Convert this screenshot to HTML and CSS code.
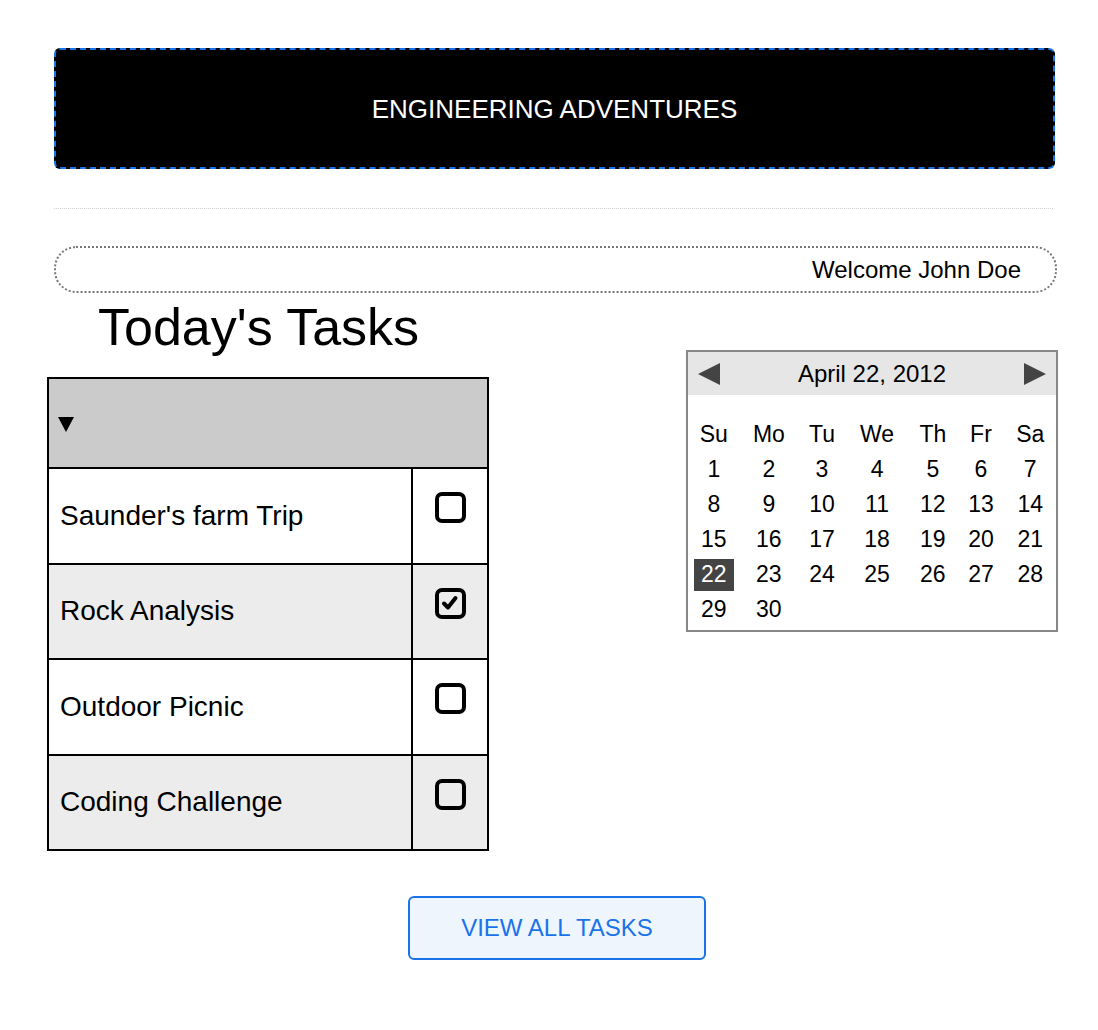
FILE: index.html
```html
<!DOCTYPE html>
<html lang="en">
<head>
<meta charset="utf-8">
<title>Engineering Adventures</title>
<link rel="stylesheet" href="styles.css">
</head>
<body>
<div class="page">
  <header class="banner">ENGINEERING ADVENTURES</header>
  <div class="divider"></div>
  <div class="welcome">Welcome John Doe</div>

  <div class="main">
    <section class="tasks">
      <h1 class="tasks-title">Today's Tasks</h1>
      <div class="task-table">
        <div class="task-head">
          <svg class="sort-tri" width="16" height="15" viewBox="0 0 16 15"><polygon points="0,0 16,0 8,15" fill="#000"/></svg>
        </div>
        <div class="task-row">
          <div class="task-name">Saunder's farm Trip</div>
          <div class="task-check"><span class="box"></span></div>
        </div>
        <div class="task-row alt">
          <div class="task-name">Rock Analysis</div>
          <div class="task-check"><span class="box"><svg width="22" height="22" viewBox="0 0 22 22"><polyline points="5,11.5 9,15.5 16.5,6" fill="none" stroke="#000" stroke-width="4" stroke-linecap="round" stroke-linejoin="round"/></svg></span></div>
        </div>
        <div class="task-row">
          <div class="task-name">Outdoor Picnic</div>
          <div class="task-check"><span class="box"></span></div>
        </div>
        <div class="task-row alt">
          <div class="task-name">Coding Challenge</div>
          <div class="task-check"><span class="box"></span></div>
        </div>
      </div>
    </section>

    <aside class="calendar">
      <div class="cal-head">
        <svg width="22" height="22" viewBox="0 0 22 22"><polygon points="22,0 22,22 0,11" fill="#444"/></svg>
        <span class="cal-title">April 22, 2012</span>
        <svg width="22" height="22" viewBox="0 0 22 22"><polygon points="0,0 0,22 22,11" fill="#444"/></svg>
      </div>
      <table class="cal-grid">
        <tr><th>Su</th><th>Mo</th><th>Tu</th><th>We</th><th>Th</th><th>Fr</th><th>Sa</th></tr>
        <tr><td>1</td><td>2</td><td>3</td><td>4</td><td>5</td><td>6</td><td>7</td></tr>
        <tr><td>8</td><td>9</td><td>10</td><td>11</td><td>12</td><td>13</td><td>14</td></tr>
        <tr><td>15</td><td>16</td><td>17</td><td>18</td><td>19</td><td>20</td><td>21</td></tr>
        <tr><td><span class="today">22</span></td><td>23</td><td>24</td><td>25</td><td>26</td><td>27</td><td>28</td></tr>
        <tr><td>29</td><td>30</td><td></td><td></td><td></td><td></td><td></td></tr>
      </table>
    </aside>
  </div>

  <div class="actions">
    <button class="btn-all">VIEW ALL TASKS</button>
  </div>
</div>
</body>
</html>
```

FILE: styles.css
```css
* { box-sizing: border-box; }

body {
  margin: 0;
  background: #fff;
  color: #000;
  font-family: "Liberation Sans", Arial, Helvetica, sans-serif;
}

.page {
  padding-top: 48px;
  padding-bottom: 60px;
}

.banner {
  margin: 0 43px 0 54px;
  height: 121px;
  background: #000;
  color: #fff;
  border: 2px dashed #1a73e8;
  border-radius: 6px;
  display: flex;
  align-items: center;
  justify-content: center;
  font-size: 26px;
  padding-top: 2px;
}

.divider {
  margin: 39px 45px 0 54px;
  border-top: 1px dotted #d0d0d0;
}

.welcome {
  margin: 37px 41px 0 54px;
  height: 47px;
  border: 2px dotted #777;
  border-radius: 22px;
  display: flex;
  align-items: center;
  justify-content: flex-end;
  padding-right: 34px;
  font-size: 24px;
}

.main {
  display: flex;
  justify-content: space-between;
  align-items: flex-start;
  margin: 0 40px 0 47px;
}

.tasks {
  width: 442px;
}

.tasks-title {
  margin: 8px 0 0 51px;
  font-size: 52px;
  line-height: 52px;
  font-weight: normal;
}

.task-table {
  margin-top: 24px;
  border: 2px solid #000;
}

.task-head {
  height: 88px;
  background: #cbcbcb;
  display: flex;
  align-items: center;
  padding-left: 9px;
  padding-top: 2px;
}

.task-row {
  display: flex;
  height: 95.5px;
  border-top: 2px solid #000;
  background: #fff;
}

.task-row.alt {
  background: #ececec;
}

.task-name {
  flex: 1;
  display: flex;
  align-items: center;
  padding-left: 11px;
  font-size: 28px;
  border-right: 2px solid #000;
}

.task-check {
  width: 74px;
  display: flex;
  align-items: center;
  justify-content: center;
  padding-bottom: 16px;
}

.box {
  width: 31px;
  height: 31px;
  border: 4px solid #000;
  border-radius: 7px;
  display: flex;
  align-items: center;
  justify-content: center;
}

.calendar {
  margin-top: 57px;
  width: 372px;
  border: 2px solid #888;
  padding-bottom: 3px;
}

.cal-head {
  height: 43px;
  background: #e6e6e6;
  display: flex;
  align-items: center;
  justify-content: space-between;
  padding: 0 10px;
}

.cal-title {
  font-size: 24px;
}

.cal-grid {
  width: 100%;
  border-collapse: collapse;
  border-spacing: 0;
  margin-top: 22px;
  font-size: 23px;
}

.cal-grid th,
.cal-grid td {
  height: 35px;
  padding: 0;
  text-align: center;
  vertical-align: middle;
  font-weight: normal;
}

.today {
  display: inline-flex;
  width: 40px;
  height: 32px;
  margin: 0 -7.5px;
  background: #444;
  color: #fff;
  align-items: center;
  justify-content: center;
  vertical-align: middle;
}

.actions {
  display: flex;
  justify-content: center;
  margin: 45px 40px 0 56px;
}

.btn-all {
  width: 298px;
  height: 64px;
  background: #eef5fd;
  color: #1a73e8;
  border: 2px solid #1a73e8;
  border-radius: 6px;
  font-family: "Liberation Sans", Arial, Helvetica, sans-serif;
  font-size: 24px;
  padding: 0;
  cursor: pointer;
}
```
